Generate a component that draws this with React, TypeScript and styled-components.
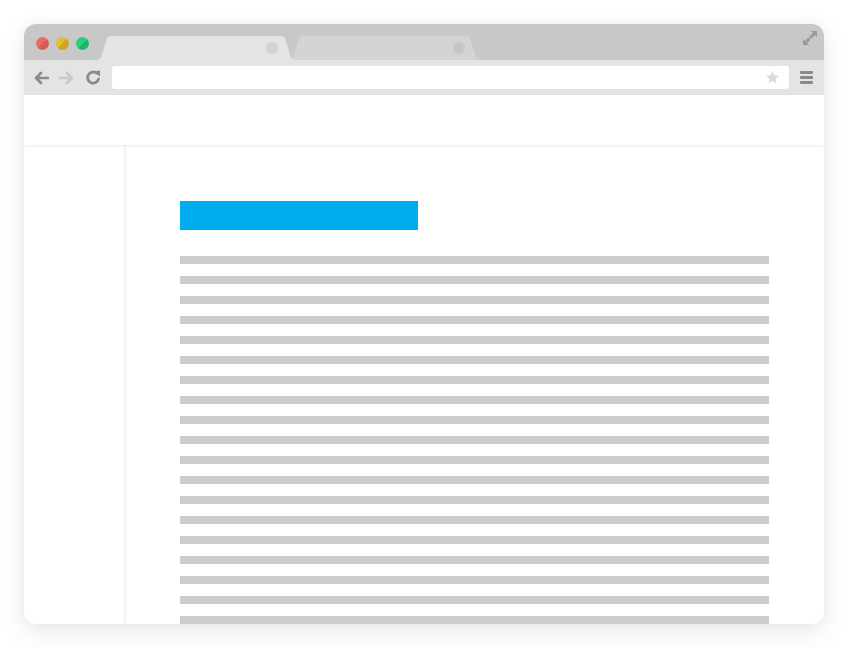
import React from 'react';
import styled, { createGlobalStyle } from 'styled-components';

const GlobalStyle = createGlobalStyle`
  html, body {
    margin: 0;
    padding: 0;
    background: #fff;
    font-family: "Liberation Sans", Arial, sans-serif;
  }
`;

const LINE_COUNT = 19;

const Page = styled.div`
  width: 848px;
  height: 648px;
  padding: 24px;
  box-sizing: border-box;
`;

const Window = styled.div`
  width: 800px;
  height: 600px;
  border-radius: 12px;
  overflow: hidden;
  background: #fff;
  box-shadow: 0 8px 28px rgba(0, 0, 0, 0.09), 0 0 12px rgba(0, 0, 0, 0.04);
  display: flex;
  flex-direction: column;
`;

const TitleBar = styled.div`
  height: 36px;
  background: #c8c8c8;
  display: flex;
  align-items: flex-end;
  padding-left: 12px;
  position: relative;
`;

const Lights = styled.div`
  display: flex;
  gap: 7px;
  align-self: flex-start;
  margin-top: 13px;
`;

const Light = styled.span<{ $color: string; $dark: string }>`
  width: 13px;
  height: 13px;
  border-radius: 50%;
  background: linear-gradient(135deg, ${p => p.$color} 50%, ${p => p.$dark} 50%);
`;

const Tabs = styled.div`
  display: flex;
  margin-left: 6px;
  height: 24px;
`;

const Tab = styled.div<{ $active?: boolean; $width: number }>`
  position: relative;
  width: ${p => p.$width}px;
  height: 24px;
  display: flex;
  align-items: center;
  justify-content: flex-end;
  padding-right: ${p => (p.$active ? 19 : 17)}px;
  box-sizing: border-box;
  z-index: ${p => (p.$active ? 2 : 1)};
  margin-left: ${p => (p.$active ? 0 : -10)}px;

  svg {
    position: absolute;
    left: 0;
    top: 0;
  }
`;

const CloseDot = styled.span<{ $color: string }>`
  position: relative;
  width: 12px;
  height: 12px;
  border-radius: 50%;
  background: ${p => p.$color};
  margin-top: -1px;
`;

const Expand = styled.div`
  position: absolute;
  right: 6px;
  top: 6px;
  width: 16px;
  height: 16px;
`;

const Toolbar = styled.div`
  height: 35px;
  background: #e4e4e4;
  display: flex;
  align-items: center;
  padding: 0 11px 0 9px;
`;

const NavButton = styled.div`
  width: 26px;
  height: 20px;
  display: flex;
  align-items: center;
  justify-content: flex-start;
`;

const AddressBar = styled.div`
  flex: 1;
  height: 23px;
  margin: 0 11px 0 1px;
  background: #fff;
  border-radius: 3px;
  display: flex;
  align-items: center;
  justify-content: flex-end;
  padding-right: 9px;
`;

const Menu = styled.div`
  display: flex;
  flex-direction: column;
  gap: 2px;
  width: 13px;
`;

const MenuBar = styled.span`
  height: 3px;
  border-radius: 1px;
  background: #8a8a8a;
`;

const Header = styled.div`
  height: 50px;
  background: #fff;
  box-shadow: 0 1px 3px rgba(0, 0, 0, 0.08);
  position: relative;
  z-index: 1;
`;

const Body = styled.div`
  flex: 1;
  display: flex;
  min-height: 0;
`;

const Sidebar = styled.div`
  width: 100px;
  border-right: 1px solid #ececec;
  box-shadow: 1px 0 3px rgba(0, 0, 0, 0.05);
`;

const Content = styled.div`
  flex: 1;
  padding: 56px 55px 0 55px;
  display: flex;
  flex-direction: column;
  overflow: hidden;
`;

const TitleBlock = styled.div`
  width: 238px;
  height: 29px;
  background: #00adef;
  margin-bottom: 26px;
  flex-shrink: 0;
`;

const Lines = styled.div`
  display: flex;
  flex-direction: column;
  gap: 12px;
`;

const TextLine = styled.div`
  height: 8px;
  background: #cccccc;
  flex-shrink: 0;
`;

const TabShape = ({ width, color }: { width: number; color: string }) => (
  <svg width={width} height={24} viewBox={`0 0 ${width} 24`}>
    <path
      d={`M0 24 C5 24 6 22 7.5 17 L11.5 4 C12.5 1 13.5 0 17 0 L${width - 17} 0 C${width - 13.5} 0 ${width - 12.5} 1 ${width - 11.5} 4 L${width - 7.5} 17 C${width - 6} 22 ${width - 5} 24 ${width} 24 Z`}
      fill={color}
    />
  </svg>
);

const BackIcon = ({ color }: { color: string }) => (
  <svg width="16" height="14" viewBox="0 0 16 14">
    <path d="M15 7H3 M8 2 L3 7 L8 12" fill="none" stroke={color} strokeWidth="2.6" strokeLinecap="round" strokeLinejoin="round" />
  </svg>
);

const ForwardIcon = ({ color }: { color: string }) => (
  <svg width="16" height="14" viewBox="0 0 16 14">
    <path d="M1 7H13 M8 2 L13 7 L8 12" fill="none" stroke={color} strokeWidth="2.6" strokeLinecap="round" strokeLinejoin="round" />
  </svg>
);

const ReloadIcon = () => (
  <svg width="17" height="17" viewBox="0 0 17 17">
    <path d="M13.6 10 A5.6 5.6 0 1 1 11.8 4.3" fill="none" stroke="#8a8a8a" strokeWidth="2.8" strokeLinecap="round" />
    <path d="M9.2 3 L15 1.2 L15 7.6 Z" fill="#8a8a8a" />
  </svg>
);

const StarIcon = () => (
  <svg width="15" height="15" viewBox="0 0 24 24">
    <path d="M12 1.5 L15.1 8.3 L22.5 9 L16.9 14 L18.5 21.5 L12 17.6 L5.5 21.5 L7.1 14 L1.5 9 L8.9 8.3 Z" fill="#dcdcdc" />
  </svg>
);

const ExpandIcon = () => (
  <svg width="16" height="16" viewBox="0 0 16 16">
    <path d="M9 1 L15 1 L15 7 Z" fill="#9a9a9a" />
    <path d="M13 3 L9.2 6.8" stroke="#9a9a9a" strokeWidth="3" strokeLinecap="round" />
    <path d="M1 9 L1 15 L7 15 Z" fill="#9a9a9a" />
    <path d="M3 13 L6.8 9.2" stroke="#9a9a9a" strokeWidth="3" strokeLinecap="round" />
  </svg>
);

export default function App() {
  return (
    <>
      <GlobalStyle />
      <Page>
        <Window>
          <TitleBar>
            <Lights>
              <Light $color="#ed6b60" $dark="#d55d54" />
              <Light $color="#e3bf2e" $dark="#c9a624" />
              <Light $color="#27d07a" $dark="#20b468" />
            </Lights>
            <Tabs>
              <Tab $active $width={202}>
                <TabShape width={202} color="#e4e4e4" />
                <CloseDot $color="#d2d2d2" />
              </Tab>
              <Tab $width={195}>
                <TabShape width={195} color="#d4d4d4" />
                <CloseDot $color="#c6c6c6" />
              </Tab>
            </Tabs>
            <Expand>
              <ExpandIcon />
            </Expand>
          </TitleBar>
          <Toolbar>
            <NavButton>
              <BackIcon color="#8a8a8a" />
            </NavButton>
            <NavButton>
              <ForwardIcon color="#c8c8c8" />
            </NavButton>
            <NavButton>
              <ReloadIcon />
            </NavButton>
            <AddressBar>
              <StarIcon />
            </AddressBar>
            <Menu>
              <MenuBar />
              <MenuBar />
              <MenuBar />
            </Menu>
          </Toolbar>
          <Header />
          <Body>
            <Sidebar />
            <Content>
              <TitleBlock />
              <Lines>
                {Array.from({ length: LINE_COUNT }, (_, i) => (
                  <TextLine key={i} />
                ))}
              </Lines>
            </Content>
          </Body>
        </Window>
      </Page>
    </>
  );
}
